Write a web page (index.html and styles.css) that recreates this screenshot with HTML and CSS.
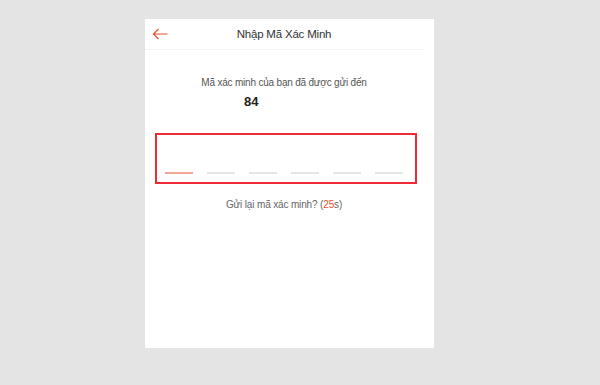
FILE: index.html
```html
<!DOCTYPE html>
<html lang="vi">
<head>
<meta charset="utf-8">
<link rel="stylesheet" href="styles.css">
</head>
<body>
<div class="card">
  <div class="header">
    <svg class="back" width="16" height="12" viewBox="0 0 16 12"><path d="M15.5 6H1.5M6.5 1L1.5 6L6.5 11" fill="none" stroke="#ee4d2d" stroke-width="1.2"/></svg>
    <div class="title">Nhập Mã Xác Minh</div>
  </div>
  <div class="sub">Mã xác minh của bạn đã được gửi đến</div>
  <div class="phone">84</div>
  <div class="otp">
    <span class="dash active"></span>
    <span class="dash"></span>
    <span class="dash"></span>
    <span class="dash"></span>
    <span class="dash"></span>
    <span class="dash"></span>
  </div>
  <div class="resend">Gửi lại mã xác minh? (<span class="count">25</span>s)</div>
</div>
</body>
</html>
```
FILE: styles.css
```css
html, body { margin: 0; padding: 0; }
body {
  background: #e4e4e4;
  font-family: "Liberation Sans", Arial, sans-serif;
  width: 600px;
  height: 385px;
  overflow: hidden;
}
.card {
  margin: 19px 0 0 145px;
  width: 289px;
  height: 329px;
  background: #fff;
  box-sizing: border-box;
}
.header {
  width: 278px;
  height: 31px;
  border-bottom: 1px solid #f3f3f3;
  display: flex;
  align-items: center;
  position: relative;
  box-sizing: border-box;
}
.back {
  margin-left: 7px;
  margin-top: -1px;
}
.title {
  position: absolute;
  left: 0;
  right: 0;
  text-align: center;
  font-size: 11.5px;
  letter-spacing: -0.2px;
  color: #333;
  margin-top: -1px;
}
.sub {
  width: 278px;
  margin-top: 27px;
  text-align: center;
  font-size: 10px;
  letter-spacing: -0.2px;
  color: #555;
}
.phone {
  margin: 6px 0 0 99px;
  font-size: 13px;
  font-weight: bold;
  color: #222;
}
.otp {
  margin: 24px 0 0 10px;
  width: 262px;
  height: 51px;
  border: 2px solid #ee2a35;
  box-sizing: border-box;
  display: flex;
  align-items: flex-end;
  padding: 0 0 8px 8px;
  gap: 14.5px;
}
.dash {
  width: 27.5px;
  height: 2px;
  background: #e6e6e6;
}
.dash.active { background: #f2a898; }
.resend {
  width: 278px;
  margin-top: 15px;
  text-align: center;
  font-size: 10px;
  letter-spacing: -0.15px;
  color: #666;
}
.count { color: #ee4d2d; }
```
